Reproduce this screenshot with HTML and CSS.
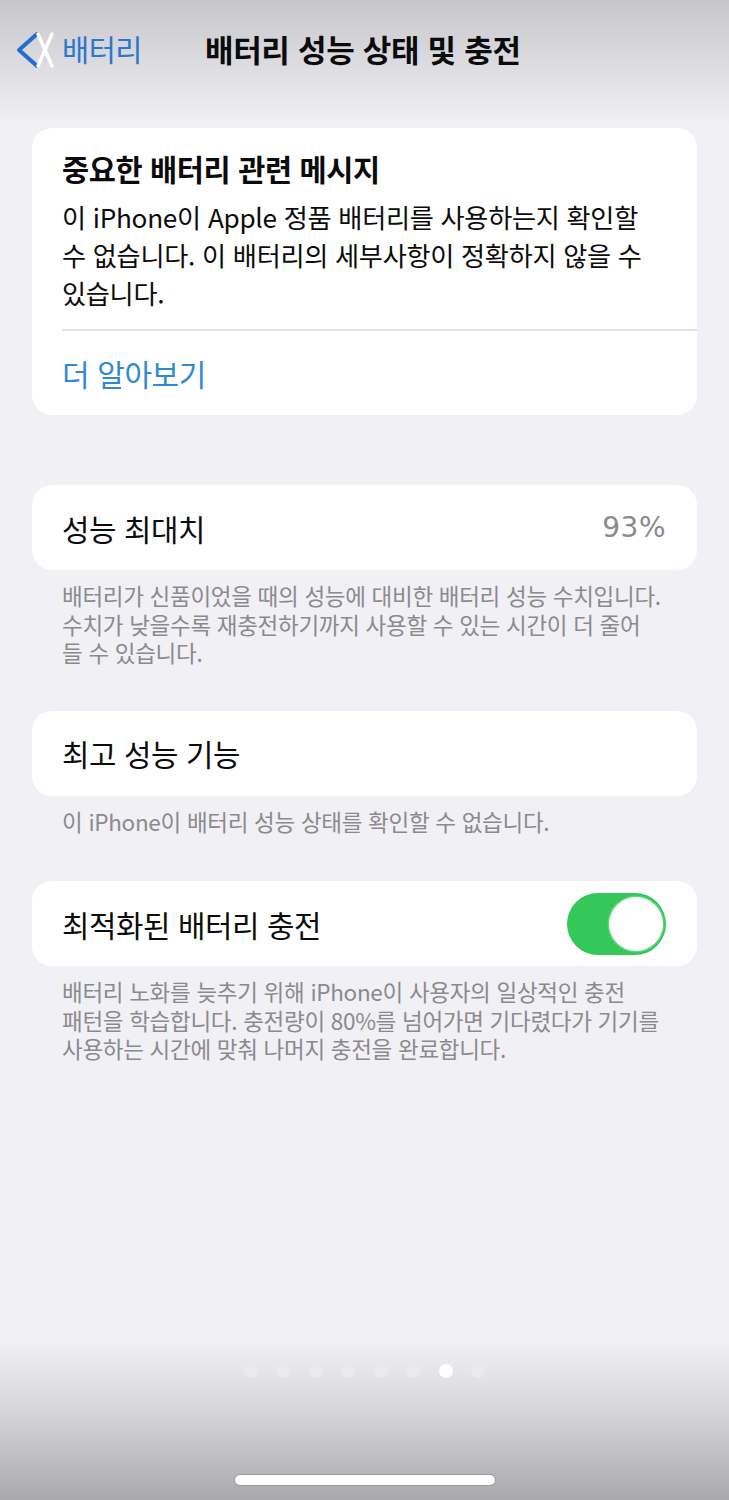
FILE: index.html
```html
<!DOCTYPE html>
<html lang="ko">
<head>
    <meta charset="UTF-8">
    <meta name="viewport" content="width=device-width, initial-scale=1.0">
    <title>배터리 성능 상태 및 충전</title>
    <link rel="stylesheet" href="styles.css">
</head>
<body>

    <div class="screen">
        <nav class="navbar">
            <a class="back" href="#">
                <svg class="back-icon" viewBox="0 0 44 40">
                    <polyline class="chevron" points="23 4 5 20 23 36"></polyline>
                    <line class="cross" x1="24" y1="4" x2="38" y2="36"></line>
                    <line class="cross" x1="38" y1="4" x2="24" y2="36"></line>
                </svg>
                <span>배터리</span>
            </a>
            <h1 class="nav-title">배터리 성능 상태 및 충전</h1>
        </nav>

        <main class="content">
            <section class="card notice">
                <h2 class="notice-title">중요한 배터리 관련 메시지</h2>
                <p class="notice-text">이 iPhone이 Apple 정품 배터리를 사용하는지 확인할<br>수 없습니다. 이 배터리의 세부사항이 정확하지 않을 수<br>있습니다.</p>
                <div class="divider"></div>
                <a class="link-row" href="#">더 알아보기</a>
            </section>

            <section class="group first-group">
                <div class="card row">
                    <span class="label">성능 최대치</span>
                    <span class="value">93%</span>
                </div>
                <p class="footer">배터리가 신품이었을 때의 성능에 대비한 배터리 성능 수치입니다.<br>수치가 낮을수록 재충전하기까지 사용할 수 있는 시간이 더 줄어<br>들 수 있습니다.</p>
            </section>

            <section class="group">
                <div class="card row">
                    <span class="label">최고 성능 기능</span>
                </div>
                <p class="footer">이 iPhone이 배터리 성능 상태를 확인할 수 없습니다.</p>
            </section>

            <section class="group last-group">
                <div class="card row">
                    <span class="label">최적화된 배터리 충전</span>
                    <span class="switch on"><span class="knob"></span></span>
                </div>
                <p class="footer">배터리 노화를 늦추기 위해 iPhone이 사용자의 일상적인 충전<br>패턴을 학습합니다. 충전량이 80%를 넘어가면 기다렸다가 기기를<br>사용하는 시간에 맞춰 나머지 충전을 완료합니다.</p>
            </section>
        </main>

        <div class="bottom-bar">
            <div class="page-dots">
                <span class="dot"></span>
                <span class="dot"></span>
                <span class="dot"></span>
                <span class="dot"></span>
                <span class="dot"></span>
                <span class="dot"></span>
                <span class="dot active"></span>
                <span class="dot"></span>
            </div>
            <div class="home-indicator"></div>
        </div>
    </div>

</body>
</html>
```

FILE: styles.css
```css
/* Settings colours */
:root {
    --bg-color: #f0f0f5;
    --card-bg-color: #ffffff;
    --text-color: #0b0b0c;
    --secondary-color: #8a8a8e;
    --link-color: #3189d3;
    --separator-color: #e2e2e6;
    --switch-on: #34c759;
    --font-main: "Noto Sans CJK KR", "Noto Sans", sans-serif;
}

body {
    margin: 0;
    font-family: var(--font-main);
    color: var(--text-color);
    background-color: var(--bg-color);
}

.screen {
    width: 729px;
    height: 1500px;
    display: flex;
    flex-direction: column;
    background: linear-gradient(to bottom, #c6c6cb 0px, #e4e4e9 90px, var(--bg-color) 125px, var(--bg-color) 1340px, #d6d6db 1410px, #a9a9ae 1500px);
    overflow: hidden;
}

/* Navigation bar */
.navbar {
    height: 100px;
    display: flex;
    align-items: center;
    padding: 0 0 0 14px;
    box-sizing: border-box;
}

.back {
    display: flex;
    align-items: center;
    text-decoration: none;
    color: #2b77cc;
    font-size: 29.5px;
    line-height: 1;
}

.back-icon {
    width: 44px;
    height: 40px;
    margin-right: 4px;
    fill: none;
    stroke-linecap: round;
    stroke-linejoin: round;
}

.back-icon .chevron {
    stroke: #1f6fd0;
    stroke-width: 4;
}

.back-icon .cross {
    stroke: #ffffff;
    stroke-width: 3.5;
}

.back span {
    letter-spacing: -0.5px;
    padding-bottom: 3px;
}

.nav-title {
    margin: 0 0 0 63px;
    font-size: 31px;
    font-weight: 700;
    letter-spacing: -0.3px;
    line-height: 1;
    padding-bottom: 3px;
}

/* Content */
.content {
    flex: 1;
    padding: 28px 32px 0;
}

.card {
    background-color: var(--card-bg-color);
    border-radius: 20px;
}

.notice {
    padding: 20px 0 0 30px;
}

.notice-title {
    margin: 0;
    font-size: 29.5px;
    font-weight: 700;
    line-height: 40px;
    letter-spacing: -0.4px;
}

.notice-text {
    margin: 10px 0 0;
    font-size: 26.2px;
    line-height: 38px;
    letter-spacing: -0.3px;
}

.divider {
    height: 2px;
    margin-top: 17px;
    background-color: var(--separator-color);
}

.link-row {
    display: flex;
    align-items: center;
    height: 84px;
    color: var(--link-color);
    text-decoration: none;
    font-size: 30px;
    letter-spacing: -0.4px;
}

.group {
    margin-top: 44px;
}

.first-group {
    margin-top: 70px;
}

.last-group {
    margin-top: 46px;
}

.row {
    height: 85px;
    display: flex;
    align-items: center;
    justify-content: space-between;
    padding: 0 31px 0 30px;
    box-sizing: border-box;
}

.label {
    font-size: 29.8px;
    letter-spacing: -0.4px;
}

.value {
    font-size: 28px;
    color: var(--secondary-color);
    font-family: "DejaVu Sans", sans-serif;
    letter-spacing: 0.5px;
}

.footer {
    margin: 11px 0 0 30px;
    font-size: 22.5px;
    line-height: 28.5px;
    color: var(--secondary-color);
    letter-spacing: -0.3px;
}

/* Toggle switch */
.switch {
    width: 99px;
    height: 62px;
    border-radius: 31px;
    background-color: #e9e9ea;
    display: flex;
    align-items: center;
    padding: 0 3px;
    box-sizing: border-box;
}

.switch.on {
    background-color: var(--switch-on);
    justify-content: flex-end;
}

.knob {
    width: 54px;
    height: 54px;
    border-radius: 50%;
    background-color: #fff;
    box-shadow: 0 0 0 1.5px #5bd47a;
}

/* Page dots and home indicator */
.bottom-bar {
    height: 160px;
    display: flex;
    flex-direction: column;
    align-items: center;
}

.page-dots {
    display: flex;
    gap: 18.5px;
    margin-top: 24px;
}

.dot {
    width: 14px;
    height: 14px;
    border-radius: 50%;
    background-color: #e9e9ee;
}

.dot.active {
    background-color: #ffffff;
}

.home-indicator {
    width: 260px;
    height: 10px;
    margin-top: 97px;
    border-radius: 5px;
    background-color: #ffffff;
    box-shadow: 0 0 0 1px #9c9ca1;
}
```
